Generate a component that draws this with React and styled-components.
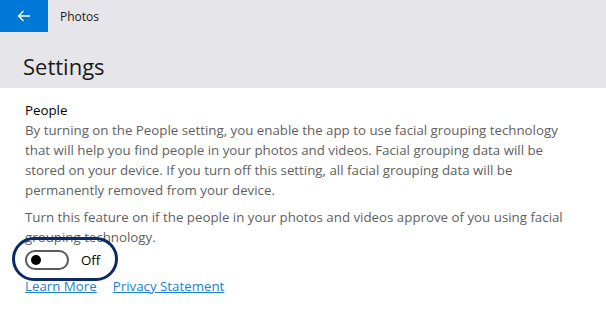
import React from 'react'
import styled, { createGlobalStyle } from 'styled-components'

const Global = createGlobalStyle`
    html, body {
        margin: 0;
        padding: 0;
        background: #ffffff;
        font-family: "Open Sans", "Noto Sans", sans-serif;
    }
`

function App() {
    return (
        <Page>
            <Global />
            <Header>
                <TitleBar>
                    <BackButton aria-label="Back">
                        <svg width="16" height="16" viewBox="0 0 16 16" fill="none">
                            <path d="M14 8H2.5M7.5 3L2.5 8l5 5" stroke="#fff" strokeWidth="1.3" />
                        </svg>
                    </BackButton>
                    <AppName>Photos</AppName>
                </TitleBar>
                <PageTitle>Settings</PageTitle>
            </Header>
            <Content>
                <SectionTitle>People</SectionTitle>
                <Paragraph>
                    By turning on the People setting, you enable the app to use facial grouping technology
                    that will help you find people in your photos and videos. Facial grouping data will be
                    stored on your device. If you turn off this setting, all facial grouping data will be
                    permanently removed from your device.
                </Paragraph>
                <Paragraph $gap>
                    Turn this feature on if the people in your photos and videos approve of you using facial
                    grouping technology.
                </Paragraph>
                <ToggleRow>
                    <Toggle>
                        <Knob />
                    </Toggle>
                    <ToggleLabel>Off</ToggleLabel>
                    <Highlight />
                </ToggleRow>
                <Links>
                    <Link href="#">Learn More</Link>
                    <Link href="#">Privacy Statement</Link>
                </Links>
            </Content>
        </Page>
    )
}

export default App

const Page = styled.div`
    width: 606px;
    height: 314px;
    overflow: hidden;
    background: #ffffff;
`

const Header = styled.div`
    background: #e6e6ea;
    height: 88px;
`

const TitleBar = styled.div`
    display: flex;
    align-items: center;
    height: 32px;
`

const BackButton = styled.div`
    width: 48px;
    height: 32px;
    background: #0078d7;
    display: flex;
    align-items: center;
    justify-content: center;
`

const AppName = styled.div`
    margin-left: 12px;
    font-size: 12px;
    color: #1a1a1a;
`

const PageTitle = styled.h1`
    margin: 0;
    padding: 18px 0 0 23px;
    font-family: "Open Sans", sans-serif;
    font-weight: 400;
    font-size: 22px;
    line-height: 32px;
    color: #1a1a1a;
`

const Content = styled.div`
    padding: 12px 25px 0 25px;
`

const SectionTitle = styled.div`
    font-size: 13.3px;
    line-height: 20px;
    color: #000;
`

const Paragraph = styled.p`
    margin: ${p => (p.$gap ? '7px' : '0')} 0 0 0;
    font-size: 13.3px;
    line-height: 20px;
    color: #5f5f5f;
`

const ToggleRow = styled.div`
    position: relative;
    display: flex;
    align-items: center;
    height: 26px;
`

const Toggle = styled.div`
    box-sizing: border-box;
    width: 44px;
    height: 20px;
    border: 2px solid #5a5a5a;
    border-radius: 10px;
    display: flex;
    align-items: center;
    padding-left: 4px;
`

const Knob = styled.div`
    width: 10px;
    height: 10px;
    border-radius: 50%;
    background: #000;
`

const ToggleLabel = styled.span`
    margin-left: 12px;
    font-size: 13.3px;
    color: #000;
`

const Highlight = styled.div`
    box-sizing: border-box;
    position: absolute;
    left: -13px;
    top: -10px;
    width: 106px;
    height: 44px;
    border: 3px solid #0b2a66;
    border-radius: 22px;
`

const Links = styled.div`
    display: flex;
    gap: 16px;
    margin-top: 3px;
`

const Link = styled.a`
    font-size: 13.3px;
    line-height: 20px;
    color: #1a7fd6;
    text-decoration: underline;
`
